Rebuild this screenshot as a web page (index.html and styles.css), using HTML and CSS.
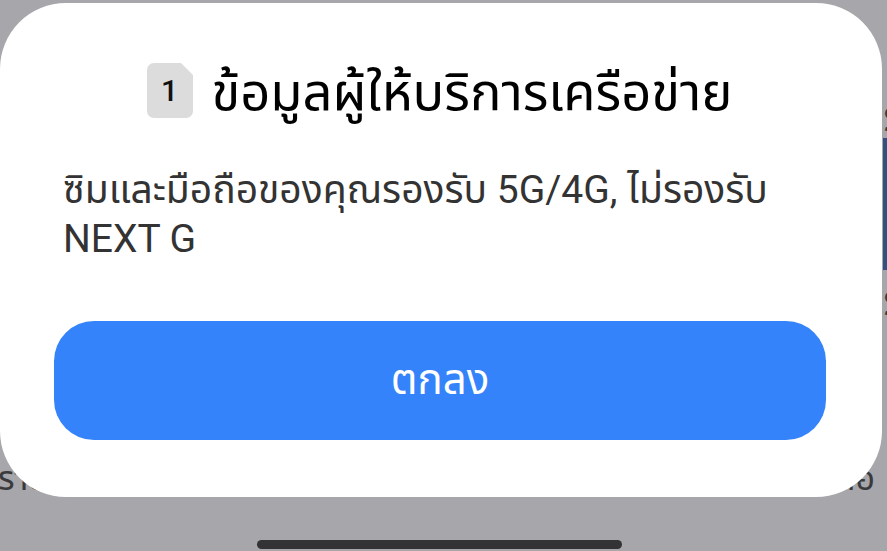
FILE: index.html
```html
<!DOCTYPE html>
<html lang="th">
<head>
<meta charset="utf-8">
<title>ข้อมูลผู้ให้บริการเครือข่าย</title>
<link rel="stylesheet" href="styles.css">
</head>
<body>
<div class="screen">
  <div class="page">
    <div class="side">
      <div class="side-glyph">ร</div>
      <div class="side-bar"></div>
      <div class="side-glyph">ร</div>
    </div>
    <div class="bottom-row">
      <span class="bottom-left">รายการ</span>
      <span class="bottom-right">ต่อ</span>
    </div>
  </div>

  <div class="modal">
    <div class="title-row">
      <div class="sim">
        <svg width="46" height="55" viewBox="0 0 46 55" aria-hidden="true">
          <path d="M7 0 H34 L46 12 V48 A7 7 0 0 1 39 55 H7 A7 7 0 0 1 0 48 V7 A7 7 0 0 1 7 0 Z" fill="#dcdcdc"/>
        </svg>
        <span class="sim-num">1</span>
      </div>
      <h1 class="title">ข้อมูลผู้ให้บริการเครือข่าย</h1>
    </div>
    <p class="message">ซิมและมือถือของคุณรองรับ 5G/4G, ไม่รองรับ NEXT G</p>
    <button class="ok-btn">ตกลง</button>
  </div>

  <div class="home-bar"></div>
</div>
</body>
</html>
```
FILE: styles.css
```css
* { box-sizing: border-box; }
html, body { margin: 0; padding: 0; }
body {
  background: #a7a6ab;
  font-family: Roboto, "Noto Sans", "Noto Sans Thai", sans-serif;
}
.screen {
  position: relative;
  width: 887px;
  height: 551px;
  overflow: hidden;
}
.page {
  width: 887px;
  height: 551px;
  display: flex;
  flex-direction: column;
}
.side {
  align-self: flex-end;
  width: 4px;
  margin-top: 98px;
  display: flex;
  flex-direction: column;
  overflow: hidden;
}
.side-glyph {
  font-size: 44px;
  line-height: 38px;
  color: #3a3a3c;
  width: 30px;
}
.side-bar {
  height: 132px;
  margin: 2px 0 12px;
  background: #33507f;
}
.bottom-row {
  margin-top: auto;
  margin-bottom: 58px;
  display: flex;
  justify-content: space-between;
  padding: 0 12px 0 0;
  font-size: 34px;
  line-height: 30px;
  color: #3a3a3c;
}
.bottom-left { margin-left: -2px; }

.modal {
  position: absolute;
  top: 3px;
  left: 0;
  width: 882px;
  height: 494px;
  background: #ffffff;
  border-radius: 66px;
  display: flex;
  flex-direction: column;
  padding: 60px 56px 57px 54px;
}
.title-row {
  display: flex;
  justify-content: center;
  align-items: center;
  gap: 18px;
  height: 55px;
}
.sim {
  position: relative;
  width: 46px;
  height: 55px;
  flex: none;
}
.sim svg { display: block; }
.sim-num {
  position: absolute;
  inset: 0;
  display: flex;
  align-items: center;
  justify-content: center;
  font-size: 30px;
  font-weight: 500;
  color: #111;
  padding-right: 2px;
}
.title {
  margin: 0;
  font-size: 52.5px;
  font-weight: 400;
  color: #000;
  line-height: 55px;
  padding-top: 4px;
  white-space: nowrap;
}
.message {
  margin: 48px 0 0 0;
  padding-left: 9px;
  font-size: 39px;
  line-height: 49px;
  color: #333;
  width: 740px;
}
.ok-btn {
  margin-top: auto;
  height: 119px;
  width: 100%;
  border: none;
  border-radius: 40px;
  background: #3483fa;
  color: #fff;
  font-family: inherit;
  font-size: 42px;
  padding: 0;
}
.home-bar {
  position: absolute;
  left: 257px;
  top: 540px;
  width: 365px;
  height: 9px;
  border-radius: 5px;
  background: #333335;
}
```
